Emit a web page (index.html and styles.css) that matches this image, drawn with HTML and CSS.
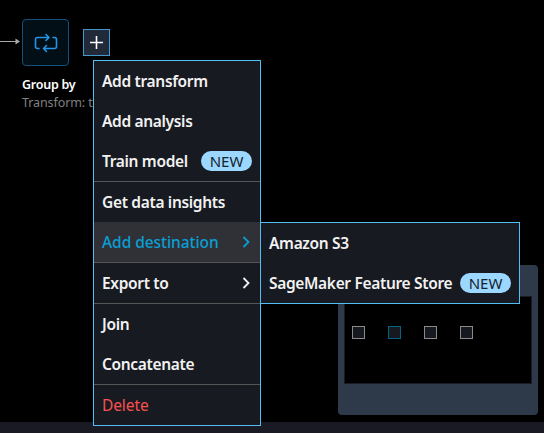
FILE: index.html
```html
<!doctype html>
<html lang="en">
<head>
<meta charset="utf-8">
<title>Data flow</title>
<link rel="stylesheet" href="styles.css">
</head>

<body>

<div class="canvas">
    <svg class="edge" width="22" height="10" viewBox="0 0 22 10">
        <path d="M0 5.5H17" stroke="#aaa" fill="none"/>
        <path d="M15.5 2.5L20 5.5L15.5 8.5Z" fill="#aaa"/>
    </svg>
    <div class="node">
        <div class="node-box">
            <svg width="24" height="22" viewBox="0 0 24 22" fill="none" stroke="#2196e8" stroke-width="1.6" stroke-linecap="round" stroke-linejoin="round">
                <path d="M5 16.5H3.5Q1.5 16.5 1.5 14.5V7.5Q1.5 5.5 3.5 5.5H14.5M12 2.5L15 5.5L12 8.5"/>
                <path d="M19 5.5H20.5Q22.5 5.5 22.5 7.5V14.5Q22.5 16.5 20.5 16.5H9.5M12.5 13.5L9.5 16.5L12.5 19.5"/>
            </svg>
        </div>
        <p class="node-name">Group by</p>
        <p class="node-type">Transform: test</p>
    </div>
    <div class="plus">
        <svg width="25" height="25" viewBox="0 0 25 25" stroke="#fff" stroke-width="1.6"><path d="M6 12.5H19M12.5 6V19"/></svg>
    </div>
    <div class="minimap">
        <div class="minimap-view">
            <i></i>
            <i class="current"></i>
            <i></i>
            <i></i>
        </div>
    </div>
</div>
<div class="footer"></div>

<div class="menu main-menu">
    <ul>
        <li><span>Add transform</span></li>
        <li><span>Add analysis</span></li>
        <li><span>Train model</span><b class="badge">NEW</b></li>
    </ul>
    <ul>
        <li><span>Get data insights</span></li>
        <li class="active"><span>Add destination</span><svg class="arrow" width="8" height="12" viewBox="0 0 8 12"><path d="M1.5 1L6.5 6L1.5 11"/></svg></li>
    </ul>
    <ul>
        <li><span>Export to</span><svg class="arrow" width="8" height="12" viewBox="0 0 8 12"><path d="M1.5 1L6.5 6L1.5 11"/></svg></li>
    </ul>
    <ul>
        <li><span>Join</span></li>
        <li><span>Concatenate</span></li>
    </ul>
    <ul>
        <li class="delete"><span>Delete</span></li>
    </ul>
</div>

<div class="menu sub-menu">
    <ul>
        <li><span>Amazon S3</span></li>
        <li><span>SageMaker Feature Store</span><b class="badge">NEW</b></li>
    </ul>
</div>

</body>
</html>
```
FILE: styles.css
```css
* { padding: 0; margin: 0; box-sizing: border-box; }
li { list-style: none; }
svg { display: block; }

body {
	height: 433px;
	display: flex;
	flex-direction: column;
	background: #000;
	color: #fff;
	font-family: "Noto Sans", "Open Sans", sans-serif;
	overflow: hidden;
	position: relative;
}

/* flow canvas */
.canvas {
	flex: 1;
	position: relative;
}
.edge {
	position: absolute;
	left: 0;
	top: 36px;
}
.node {
	position: absolute;
	left: 22px;
	top: 19px;
	white-space: nowrap;
}
.node-box {
	width: 47px;
	height: 47px;
	margin-bottom: 10px;
	display: flex;
	align-items: center;
	justify-content: center;
	border: 1px solid #14507c;
	border-radius: 4px;
	background: #030f16;
}
.node-name {
	font-size: 12.5px;
	line-height: 18px;
	font-weight: 600;
	letter-spacing: -0.25px;
}
.node-type {
	font-size: 12.5px;
	line-height: 18px;
	letter-spacing: -0.1px;
	color: #808080;
}
.plus {
	position: absolute;
	left: 83px;
	top: 29px;
	width: 27px;
	height: 27px;
	border: 1px solid #4598cb;
	background: #212a38;
}

.minimap {
	position: absolute;
	left: 338px;
	top: 265px;
	width: 200px;
	height: 150px;
	padding: 31px 6px;
	border-radius: 4px;
	background: #2e3a4a;
}
.minimap-view {
	height: 88px;
	padding: 29px 7px;
	display: flex;
	gap: 23px;
	border: 1px solid #171c25;
	background: #000;
}
.minimap-view i {
	width: 13px;
	height: 13px;
	border: 1px solid #8a8a8a;
	background: #16191f;
}
.minimap-view .current { border-color: #04637f; }

.footer {
	height: 11px;
	background: #1a1a24;
}

/* menus */
.menu {
	position: absolute;
	border: 1px solid #55bdf5;
	background: #171a21;
	font-size: 15.5px;
	font-weight: 600;
	letter-spacing: -0.33px;
	white-space: nowrap;
}
.main-menu {
	left: 93px;
	top: 60px;
	width: 168px;
}
.sub-menu {
	left: 260px;
	top: 222px;
	width: 260px;
}
.menu ul + ul { border-top: 1px solid #545557; }
.menu li {
	height: 40px;
	padding: 0 8px;
	display: flex;
	align-items: center;
	justify-content: space-between;
	color: #f2f2f2;
}
.menu .active {
	background: #303136;
	color: #0a9fd4;
	font-weight: 500;
	letter-spacing: -0.05px;
}
.menu .delete {
	color: #f8514f;
	font-weight: 400;
	letter-spacing: -0.1px;
}
.badge {
	width: 51px;
	height: 20px;
	border-radius: 10px;
	background: #9cd7ff;
	color: #16232e;
	font-size: 15px;
	line-height: 20px;
	font-weight: 400;
	letter-spacing: 0;
	text-align: center;
}
.arrow {
	margin-right: 2px;
	fill: none;
	stroke: currentColor;
	stroke-width: 1.8;
}
```
